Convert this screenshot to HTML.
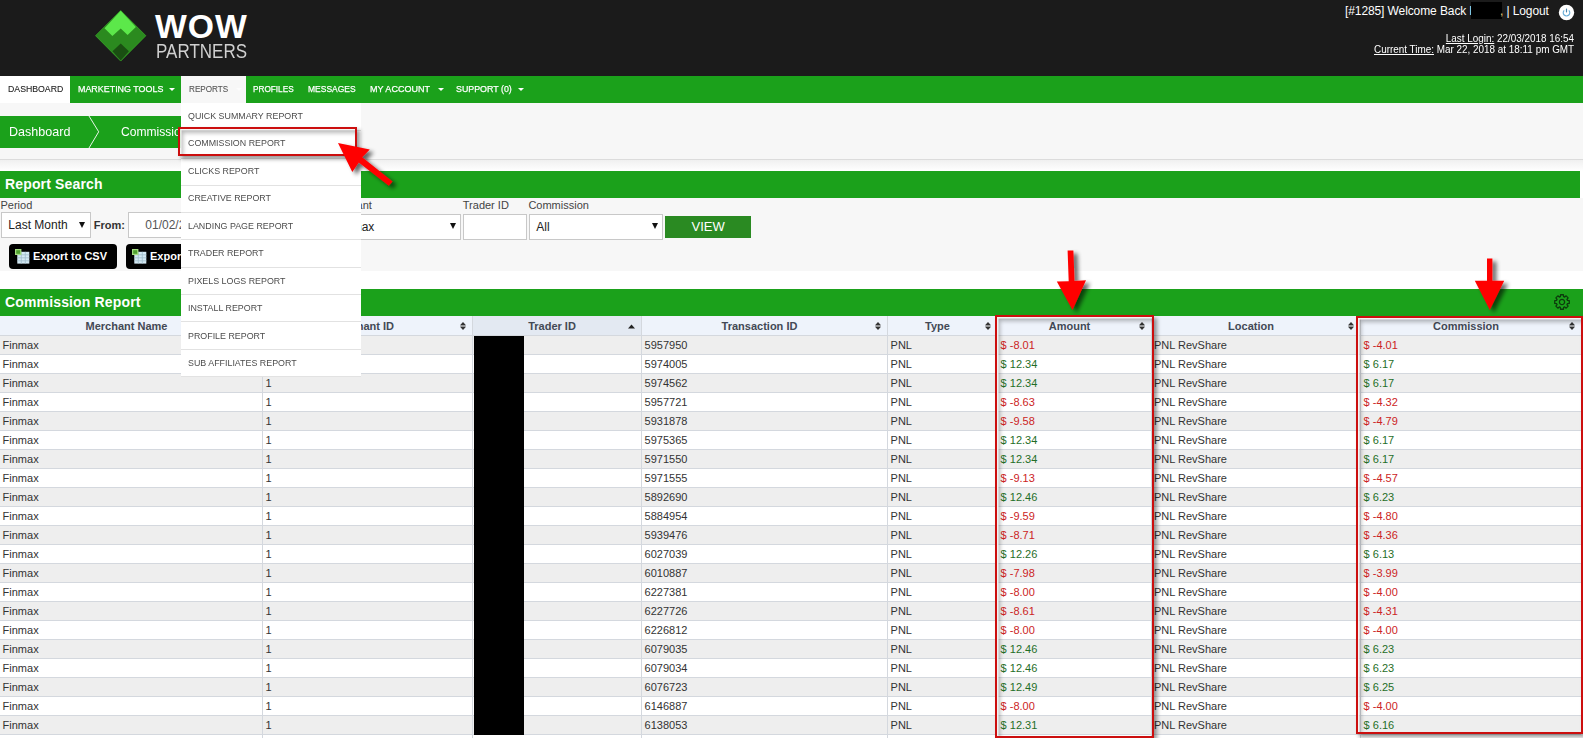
<!DOCTYPE html>
<html><head><meta charset="utf-8">
<style>
*{box-sizing:border-box}
html,body{margin:0;padding:0}
body{width:1583px;height:738px;overflow:hidden;position:relative;background:#fff;font-family:"Liberation Sans",sans-serif;color:#333}
.abs{position:absolute}
#hdr{position:absolute;left:0;top:0;width:1583px;height:76px;background:#1b1b1b}
#nav{position:absolute;left:0;top:76px;width:1583px;height:27px;background:#1ba11b}
.nt{position:absolute;top:-0.6px;height:27px;line-height:27px;font-size:9.6px;color:#fff;-webkit-text-stroke:0.25px currentColor;white-space:nowrap;transform-origin:0 50%}
.caret{position:absolute;top:11.8px;width:0;height:0;border-left:3.6px solid transparent;border-right:3.6px solid transparent;border-top:3.6px solid #fff}
#bcarea{position:absolute;left:0;top:103px;width:1583px;height:57px;background:#f7f7f7;border-bottom:1px solid #dcdcdc}
#bc{position:absolute;left:0;top:116px;width:250px;height:32px;background:#1ba11b}
.bar{position:absolute;left:0;height:27px;background:#1ba11b;color:#fff;font-weight:bold;font-size:14px;line-height:27px;padding-left:5px;letter-spacing:0.15px}
#search{position:absolute;left:0;top:198px;width:1583px;height:73px;background:#f7f7f7}
.lbl{position:absolute;margin-top:1px;font-size:11px;color:#444;white-space:nowrap}
.inp{position:absolute;background:#fff;border:1px solid #c8c8c8;font-size:12px;padding-top:1px;color:#222;white-space:nowrap}
.arr{position:absolute;width:0;height:0;border-left:3px solid transparent;border-right:3px solid transparent;border-top:6px solid #111}
.btn{position:absolute;overflow:hidden;background:#000;border-radius:4px;color:#fff;font-weight:bold;font-size:11px;white-space:nowrap}
.row{position:absolute;left:0;width:1581px;height:19px;border-bottom:1px solid #d4d8de}
.cell{position:absolute;height:19px;line-height:19px;font-size:11px;color:#333;white-space:nowrap}
.neg{color:#cc2424}
.pos{color:#1f6e28}
.vl{position:absolute;top:316px;width:1px;height:422px;background:#d4d8de}
.hc{position:absolute;top:316px;height:20px;line-height:20px;text-align:center;font-weight:bold;font-size:11px;color:#434955;border-bottom:1px solid #d4d8de;white-space:nowrap}
.si{position:absolute}
#menu{position:absolute;left:181px;top:103px;width:180px;height:273px;background:#fff}
.mi{position:absolute;left:0;width:180px;border-bottom:1px solid #e2e2e2;font-size:9.6px;color:#4c4c4c;padding-left:6.8px;line-height:24px;white-space:nowrap}
.ms{display:inline-block;position:relative;transform:scaleX(0.925);transform-origin:0 50%}
.redbox{position:absolute;border:2px solid #cc0f0f;box-shadow:3px 3px 4px rgba(0,0,0,.4), inset 1.5px 1.5px 0 rgba(255,255,255,.85), inset 3px 4px 4px rgba(0,0,0,.28)}
</style></head><body>
<div id="hdr">
  <svg class="abs" style="left:95px;top:10px" width="52" height="52" viewBox="0 0 52 52">
    <path d="M25.7 0.5 L50.9 25.7 L25.7 51.1 L0.5 25.7Z" fill="#2b8a1f" stroke="#3fbf2c" stroke-width="0.6"/>
    <path d="M25.7 0.8 L40.9 17 L32.6 25.1 L25.7 18.6 L17.4 25.9 L9.5 18.2Z" fill="#5ce84a"/>
    <path d="M25.7 33.6 L33.9 41.3 L25.7 50.6 L17.5 41.3Z" fill="#1a4f12"/>
  </svg>
  <div class="abs" style="left:155px;top:7px;font-size:33.7px;line-height:38px;font-weight:bold;color:#fff;letter-spacing:1px">WOW</div>
  <div class="abs" style="left:156px;top:39px;font-size:20px;line-height:24px;color:#d0d0d0;transform:scaleX(0.85);transform-origin:0 0">PARTNERS</div>
  <div class="abs" style="left:1345px;top:2px;font-size:12px;color:#fff;white-space:nowrap;letter-spacing:-0.1px">[#1285] Welcome Back l<span style="display:inline-block;width:31px;height:17px;background:#000;vertical-align:-4px;margin-left:-1px"></span><span style="margin-left:-2px;color:#e8d070">,</span> | Logout</div>
  <svg class="abs" style="left:1558px;top:4px" width="17" height="17" viewBox="0 0 17 17"><circle cx="8.5" cy="8.5" r="7.7" fill="#fff"/><path d="M6.2 6.3 A3.3 3.3 0 1 0 10.8 6.3" fill="none" stroke="#6aaed8" stroke-width="1.15"/><path d="M8.5 4.6 V8.4" stroke="#4a86ad" stroke-width="1.15"/></svg>
  <div class="abs" style="right:9px;top:33px;font-size:10px;color:#fff;text-align:right;line-height:11px;white-space:nowrap;transform:scaleX(0.99);transform-origin:100% 0"><u>Last Login:</u> 22/03/2018 16:54<br><u>Current Time:</u> Mar 22, 2018 at 18:11 pm GMT</div>
</div>
<div id="nav">
  <div class="abs" style="left:0;top:0;width:70px;height:27px;background:#fff"></div>
  <div class="abs" style="left:181px;top:0;width:64.6px;height:27px;background:#f7f7f7"></div>
  <div class="nt" style="left:7.7px;color:#222;-webkit-text-stroke:0.1px #222;transform:scaleX(0.910)">DASHBOARD</div>
  <div class="nt" style="left:77.6px;transform:scaleX(0.929)">MARKETING TOOLS</div><div class="caret" style="left:169px"></div>
  <div class="nt" style="left:188.5px;color:#555;-webkit-text-stroke:0.1px #555;transform:scaleX(0.848)">REPORTS</div><div class="caret" style="left:236px;border-top-color:#fcfcfc"></div>
  <div class="nt" style="left:253.3px;transform:scaleX(0.857)">PROFILES</div>
  <div class="nt" style="left:308px;transform:scaleX(0.884)">MESSAGES</div>
  <div class="nt" style="left:370.4px;transform:scaleX(0.940)">MY ACCOUNT</div><div class="caret" style="left:438px"></div>
  <div class="nt" style="left:455.6px;transform:scaleX(0.923)">SUPPORT (0)</div><div class="caret" style="left:518px"></div>
</div>
<div id="bcarea"></div>
<div class="abs" style="left:0;top:160px;width:1583px;height:11px;background:linear-gradient(#f0f0f0,#fff)"></div>
<div id="bc">
  <div class="abs" style="left:9px;top:-0.5px;line-height:32px;font-size:13px;color:#fff;transform:scaleX(0.965);transform-origin:0 0">Dashboard</div>
  <svg class="abs" style="left:86px;top:0" width="16" height="32" viewBox="0 0 16 32"><path d="M3 0 L12.7 15.8 L3 32" fill="none" stroke="#e8f5e8" stroke-width="1"/></svg>
  <div class="abs" style="left:120.5px;top:-0.5px;line-height:32px;font-size:13px;color:#fff;transform:scaleX(0.93);transform-origin:0 0">Commission Report</div>
</div>
<div class="bar" style="top:171px;width:1580px">Report Search</div>
<div id="search">
  <div class="lbl" style="left:0.5px;top:0px">Period</div>
  <div class="inp" style="left:1.3px;top:14.4px;width:89.3px;height:25.9px;padding-left:6px;line-height:23px">Last Month</div><div class="arr" style="left:79px;top:24px"></div>
  <div class="lbl" style="left:93.8px;top:20px;font-weight:bold;font-size:11px;color:#333">From:</div>
  <div class="inp" style="left:128.3px;top:14.3px;width:120px;height:25.9px;padding-left:16px;line-height:23px;color:#555">01/02/2018</div>
  <div class="lbl" style="left:326px;top:0px">Merchant</div>
  <div class="inp" style="left:326px;top:16.4px;width:135.4px;height:25.8px;padding-left:8px;line-height:23px">Finmax</div><div class="arr" style="left:449.7px;top:25px"></div>
  <div class="lbl" style="left:462.8px;top:0px">Trader ID</div>
  <div class="inp" style="left:463.4px;top:16.4px;width:64px;height:25.8px"></div>
  <div class="lbl" style="left:528.4px;top:0px">Commission</div>
  <div class="inp" style="left:529.3px;top:16.4px;width:134.1px;height:25.8px;padding-left:6px;line-height:23px">All</div><div class="arr" style="left:651.7px;top:25px"></div>
  <div class="abs" style="left:665.2px;top:18.2px;width:85.8px;height:22.3px;background:#2a8a22;color:#fff;font-size:13px;text-align:center;line-height:22px">VIEW</div>
  <div class="btn" style="left:9.1px;top:46px;width:107.8px;height:25px;padding-left:24px;line-height:25px"><svg class="abs" style="left:5.8px;top:4.6px" width="15" height="15" viewBox="0 0 15 15"><rect x="2.3" y="2.8" width="12" height="11.8" fill="#d4e9f4"/><path d="M2.3 5.8H14.3M2.3 8.8H14.3M2.3 11.8H14.3M6.3 2.8V14.6M10.3 2.8V14.6" stroke="#9fbccc" stroke-width="0.8"/><rect x="0" y="0" width="6.4" height="6" fill="#a4dc80"/><rect x="1.2" y="1.2" width="4" height="3.6" fill="#4e9e2e"/></svg>Export to CSV</div>
  <div class="btn" style="left:126px;top:46px;width:120px;height:25px;padding-left:24px;line-height:25px"><svg class="abs" style="left:5.8px;top:4.6px" width="15" height="15" viewBox="0 0 15 15"><rect x="2.3" y="2.8" width="12" height="11.8" fill="#d4e9f4"/><path d="M2.3 5.8H14.3M2.3 8.8H14.3M2.3 11.8H14.3M6.3 2.8V14.6M10.3 2.8V14.6" stroke="#9fbccc" stroke-width="0.8"/><rect x="0" y="0" width="6.4" height="6" fill="#a4dc80"/><rect x="1.2" y="1.2" width="4" height="3.6" fill="#4e9e2e"/></svg>Export to XLS</div>
</div>
<div class="bar" style="top:289px;width:1583px">Commission Report</div>
<svg class="abs" style="left:1552.7px;top:293.3px" width="18" height="18" viewBox="0 0 18 18"><g transform="translate(9,9)" fill="none" stroke="#0d3a0d" stroke-width="1.3" stroke-linejoin="round"><circle r="2.6"/><path d="M-1.64 -5.36 L-1.41 -7.26 L1.41 -7.26 L1.64 -5.36 L2.63 -4.94 L4.14 -6.13 L6.13 -4.14 L4.94 -2.63 L5.36 -1.64 L7.26 -1.41 L7.26 1.41 L5.36 1.64 L4.94 2.63 L6.13 4.14 L4.14 6.13 L2.63 4.94 L1.64 5.36 L1.41 7.26 L-1.41 7.26 L-1.64 5.36 L-2.63 4.94 L-4.14 6.13 L-6.13 4.14 L-4.94 2.63 L-5.36 1.64 L-7.26 1.41 L-7.26 -1.41 L-5.36 -1.64 L-4.94 -2.63 L-6.13 -4.14 L-4.14 -6.13 L-2.63 -4.94Z"/></g></svg>
<div class="hc" style="left:0px;width:262px;padding-right:9px;background:#eef3fb">Merchant Name</div><div class="hc" style="left:262px;width:210px;padding-right:9px;background:#eef3fb">Merchant ID</div><svg class="si" style="left:459.5px;top:322px" width="6" height="8" viewBox="0 0 6 8"><path d="M0 3.3 L3 0 L6 3.3Z M0 4.7 L3 8 L6 4.7Z" fill="#333"/><rect x="0.5" y="3.3" width="5" height="1.4" fill="#888"/></svg><div class="hc" style="left:472px;width:169px;padding-right:9px;background:#e3e9f2">Trader ID</div><svg class="si" style="left:628.0px;top:324px" width="7" height="5" viewBox="0 0 7 5"><path d="M0 4.5 L3.5 0.5 L7 4.5Z" fill="#222"/></svg><div class="hc" style="left:641px;width:246px;padding-right:9px;background:#eef3fb">Transaction ID</div><svg class="si" style="left:874.5px;top:322px" width="6" height="8" viewBox="0 0 6 8"><path d="M0 3.3 L3 0 L6 3.3Z M0 4.7 L3 8 L6 4.7Z" fill="#333"/><rect x="0.5" y="3.3" width="5" height="1.4" fill="#888"/></svg><div class="hc" style="left:887px;width:110px;padding-right:9px;background:#eef3fb">Type</div><svg class="si" style="left:984.5px;top:322px" width="6" height="8" viewBox="0 0 6 8"><path d="M0 3.3 L3 0 L6 3.3Z M0 4.7 L3 8 L6 4.7Z" fill="#333"/><rect x="0.5" y="3.3" width="5" height="1.4" fill="#888"/></svg><div class="hc" style="left:997px;width:154px;padding-right:9px;background:#eef3fb">Amount</div><svg class="si" style="left:1138.5px;top:322px" width="6" height="8" viewBox="0 0 6 8"><path d="M0 3.3 L3 0 L6 3.3Z M0 4.7 L3 8 L6 4.7Z" fill="#333"/><rect x="0.5" y="3.3" width="5" height="1.4" fill="#888"/></svg><div class="hc" style="left:1151px;width:209px;padding-right:9px;background:#eef3fb">Location</div><svg class="si" style="left:1347.5px;top:322px" width="6" height="8" viewBox="0 0 6 8"><path d="M0 3.3 L3 0 L6 3.3Z M0 4.7 L3 8 L6 4.7Z" fill="#333"/><rect x="0.5" y="3.3" width="5" height="1.4" fill="#888"/></svg><div class="hc" style="left:1360px;width:221px;padding-right:9px;background:#eef3fb">Commission</div><svg class="si" style="left:1568.5px;top:322px" width="6" height="8" viewBox="0 0 6 8"><path d="M0 3.3 L3 0 L6 3.3Z M0 4.7 L3 8 L6 4.7Z" fill="#333"/><rect x="0.5" y="3.3" width="5" height="1.4" fill="#888"/></svg>
<div class="row" style="top:336px;background:#eeeeee"></div><div class="cell" style="left:2.6px;top:336px">Finmax</div><div class="cell" style="left:265.6px;top:336px">1</div><div class="cell" style="left:644.6px;top:336px">5957950</div><div class="cell" style="left:890.6px;top:336px">PNL</div><div class="cell neg" style="left:1000.6px;top:336px">$ -8.01</div><div class="cell" style="left:1154.0px;top:336px">PNL RevShare</div><div class="cell neg" style="left:1363.6px;top:336px">$ -4.01</div><div class="row" style="top:355px;background:#ffffff"></div><div class="cell" style="left:2.6px;top:355px">Finmax</div><div class="cell" style="left:265.6px;top:355px">1</div><div class="cell" style="left:644.6px;top:355px">5974005</div><div class="cell" style="left:890.6px;top:355px">PNL</div><div class="cell pos" style="left:1000.6px;top:355px">$ 12.34</div><div class="cell" style="left:1154.0px;top:355px">PNL RevShare</div><div class="cell pos" style="left:1363.6px;top:355px">$ 6.17</div><div class="row" style="top:374px;background:#eeeeee"></div><div class="cell" style="left:2.6px;top:374px">Finmax</div><div class="cell" style="left:265.6px;top:374px">1</div><div class="cell" style="left:644.6px;top:374px">5974562</div><div class="cell" style="left:890.6px;top:374px">PNL</div><div class="cell pos" style="left:1000.6px;top:374px">$ 12.34</div><div class="cell" style="left:1154.0px;top:374px">PNL RevShare</div><div class="cell pos" style="left:1363.6px;top:374px">$ 6.17</div><div class="row" style="top:393px;background:#ffffff"></div><div class="cell" style="left:2.6px;top:393px">Finmax</div><div class="cell" style="left:265.6px;top:393px">1</div><div class="cell" style="left:644.6px;top:393px">5957721</div><div class="cell" style="left:890.6px;top:393px">PNL</div><div class="cell neg" style="left:1000.6px;top:393px">$ -8.63</div><div class="cell" style="left:1154.0px;top:393px">PNL RevShare</div><div class="cell neg" style="left:1363.6px;top:393px">$ -4.32</div><div class="row" style="top:412px;background:#eeeeee"></div><div class="cell" style="left:2.6px;top:412px">Finmax</div><div class="cell" style="left:265.6px;top:412px">1</div><div class="cell" style="left:644.6px;top:412px">5931878</div><div class="cell" style="left:890.6px;top:412px">PNL</div><div class="cell neg" style="left:1000.6px;top:412px">$ -9.58</div><div class="cell" style="left:1154.0px;top:412px">PNL RevShare</div><div class="cell neg" style="left:1363.6px;top:412px">$ -4.79</div><div class="row" style="top:431px;background:#ffffff"></div><div class="cell" style="left:2.6px;top:431px">Finmax</div><div class="cell" style="left:265.6px;top:431px">1</div><div class="cell" style="left:644.6px;top:431px">5975365</div><div class="cell" style="left:890.6px;top:431px">PNL</div><div class="cell pos" style="left:1000.6px;top:431px">$ 12.34</div><div class="cell" style="left:1154.0px;top:431px">PNL RevShare</div><div class="cell pos" style="left:1363.6px;top:431px">$ 6.17</div><div class="row" style="top:450px;background:#eeeeee"></div><div class="cell" style="left:2.6px;top:450px">Finmax</div><div class="cell" style="left:265.6px;top:450px">1</div><div class="cell" style="left:644.6px;top:450px">5971550</div><div class="cell" style="left:890.6px;top:450px">PNL</div><div class="cell pos" style="left:1000.6px;top:450px">$ 12.34</div><div class="cell" style="left:1154.0px;top:450px">PNL RevShare</div><div class="cell pos" style="left:1363.6px;top:450px">$ 6.17</div><div class="row" style="top:469px;background:#ffffff"></div><div class="cell" style="left:2.6px;top:469px">Finmax</div><div class="cell" style="left:265.6px;top:469px">1</div><div class="cell" style="left:644.6px;top:469px">5971555</div><div class="cell" style="left:890.6px;top:469px">PNL</div><div class="cell neg" style="left:1000.6px;top:469px">$ -9.13</div><div class="cell" style="left:1154.0px;top:469px">PNL RevShare</div><div class="cell neg" style="left:1363.6px;top:469px">$ -4.57</div><div class="row" style="top:488px;background:#eeeeee"></div><div class="cell" style="left:2.6px;top:488px">Finmax</div><div class="cell" style="left:265.6px;top:488px">1</div><div class="cell" style="left:644.6px;top:488px">5892690</div><div class="cell" style="left:890.6px;top:488px">PNL</div><div class="cell pos" style="left:1000.6px;top:488px">$ 12.46</div><div class="cell" style="left:1154.0px;top:488px">PNL RevShare</div><div class="cell pos" style="left:1363.6px;top:488px">$ 6.23</div><div class="row" style="top:507px;background:#ffffff"></div><div class="cell" style="left:2.6px;top:507px">Finmax</div><div class="cell" style="left:265.6px;top:507px">1</div><div class="cell" style="left:644.6px;top:507px">5884954</div><div class="cell" style="left:890.6px;top:507px">PNL</div><div class="cell neg" style="left:1000.6px;top:507px">$ -9.59</div><div class="cell" style="left:1154.0px;top:507px">PNL RevShare</div><div class="cell neg" style="left:1363.6px;top:507px">$ -4.80</div><div class="row" style="top:526px;background:#eeeeee"></div><div class="cell" style="left:2.6px;top:526px">Finmax</div><div class="cell" style="left:265.6px;top:526px">1</div><div class="cell" style="left:644.6px;top:526px">5939476</div><div class="cell" style="left:890.6px;top:526px">PNL</div><div class="cell neg" style="left:1000.6px;top:526px">$ -8.71</div><div class="cell" style="left:1154.0px;top:526px">PNL RevShare</div><div class="cell neg" style="left:1363.6px;top:526px">$ -4.36</div><div class="row" style="top:545px;background:#ffffff"></div><div class="cell" style="left:2.6px;top:545px">Finmax</div><div class="cell" style="left:265.6px;top:545px">1</div><div class="cell" style="left:644.6px;top:545px">6027039</div><div class="cell" style="left:890.6px;top:545px">PNL</div><div class="cell pos" style="left:1000.6px;top:545px">$ 12.26</div><div class="cell" style="left:1154.0px;top:545px">PNL RevShare</div><div class="cell pos" style="left:1363.6px;top:545px">$ 6.13</div><div class="row" style="top:564px;background:#eeeeee"></div><div class="cell" style="left:2.6px;top:564px">Finmax</div><div class="cell" style="left:265.6px;top:564px">1</div><div class="cell" style="left:644.6px;top:564px">6010887</div><div class="cell" style="left:890.6px;top:564px">PNL</div><div class="cell neg" style="left:1000.6px;top:564px">$ -7.98</div><div class="cell" style="left:1154.0px;top:564px">PNL RevShare</div><div class="cell neg" style="left:1363.6px;top:564px">$ -3.99</div><div class="row" style="top:583px;background:#ffffff"></div><div class="cell" style="left:2.6px;top:583px">Finmax</div><div class="cell" style="left:265.6px;top:583px">1</div><div class="cell" style="left:644.6px;top:583px">6227381</div><div class="cell" style="left:890.6px;top:583px">PNL</div><div class="cell neg" style="left:1000.6px;top:583px">$ -8.00</div><div class="cell" style="left:1154.0px;top:583px">PNL RevShare</div><div class="cell neg" style="left:1363.6px;top:583px">$ -4.00</div><div class="row" style="top:602px;background:#eeeeee"></div><div class="cell" style="left:2.6px;top:602px">Finmax</div><div class="cell" style="left:265.6px;top:602px">1</div><div class="cell" style="left:644.6px;top:602px">6227726</div><div class="cell" style="left:890.6px;top:602px">PNL</div><div class="cell neg" style="left:1000.6px;top:602px">$ -8.61</div><div class="cell" style="left:1154.0px;top:602px">PNL RevShare</div><div class="cell neg" style="left:1363.6px;top:602px">$ -4.31</div><div class="row" style="top:621px;background:#ffffff"></div><div class="cell" style="left:2.6px;top:621px">Finmax</div><div class="cell" style="left:265.6px;top:621px">1</div><div class="cell" style="left:644.6px;top:621px">6226812</div><div class="cell" style="left:890.6px;top:621px">PNL</div><div class="cell neg" style="left:1000.6px;top:621px">$ -8.00</div><div class="cell" style="left:1154.0px;top:621px">PNL RevShare</div><div class="cell neg" style="left:1363.6px;top:621px">$ -4.00</div><div class="row" style="top:640px;background:#eeeeee"></div><div class="cell" style="left:2.6px;top:640px">Finmax</div><div class="cell" style="left:265.6px;top:640px">1</div><div class="cell" style="left:644.6px;top:640px">6079035</div><div class="cell" style="left:890.6px;top:640px">PNL</div><div class="cell pos" style="left:1000.6px;top:640px">$ 12.46</div><div class="cell" style="left:1154.0px;top:640px">PNL RevShare</div><div class="cell pos" style="left:1363.6px;top:640px">$ 6.23</div><div class="row" style="top:659px;background:#ffffff"></div><div class="cell" style="left:2.6px;top:659px">Finmax</div><div class="cell" style="left:265.6px;top:659px">1</div><div class="cell" style="left:644.6px;top:659px">6079034</div><div class="cell" style="left:890.6px;top:659px">PNL</div><div class="cell pos" style="left:1000.6px;top:659px">$ 12.46</div><div class="cell" style="left:1154.0px;top:659px">PNL RevShare</div><div class="cell pos" style="left:1363.6px;top:659px">$ 6.23</div><div class="row" style="top:678px;background:#eeeeee"></div><div class="cell" style="left:2.6px;top:678px">Finmax</div><div class="cell" style="left:265.6px;top:678px">1</div><div class="cell" style="left:644.6px;top:678px">6076723</div><div class="cell" style="left:890.6px;top:678px">PNL</div><div class="cell pos" style="left:1000.6px;top:678px">$ 12.49</div><div class="cell" style="left:1154.0px;top:678px">PNL RevShare</div><div class="cell pos" style="left:1363.6px;top:678px">$ 6.25</div><div class="row" style="top:697px;background:#ffffff"></div><div class="cell" style="left:2.6px;top:697px">Finmax</div><div class="cell" style="left:265.6px;top:697px">1</div><div class="cell" style="left:644.6px;top:697px">6146887</div><div class="cell" style="left:890.6px;top:697px">PNL</div><div class="cell neg" style="left:1000.6px;top:697px">$ -8.00</div><div class="cell" style="left:1154.0px;top:697px">PNL RevShare</div><div class="cell neg" style="left:1363.6px;top:697px">$ -4.00</div><div class="row" style="top:716px;background:#eeeeee"></div><div class="cell" style="left:2.6px;top:716px">Finmax</div><div class="cell" style="left:265.6px;top:716px">1</div><div class="cell" style="left:644.6px;top:716px">6138053</div><div class="cell" style="left:890.6px;top:716px">PNL</div><div class="cell pos" style="left:1000.6px;top:716px">$ 12.31</div><div class="cell" style="left:1154.0px;top:716px">PNL RevShare</div><div class="cell pos" style="left:1363.6px;top:716px">$ 6.16</div><div class="row" style="top:735px;background:#ffffff"></div>
<div class="vl" style="left:262px"></div><div class="vl" style="left:472px"></div><div class="vl" style="left:641px"></div><div class="vl" style="left:887px"></div><div class="vl" style="left:997px"></div><div class="vl" style="left:1151px"></div><div class="vl" style="left:1360px"></div>
<div class="abs" style="left:474px;top:336px;width:50px;height:399px;background:#000"></div>
<div id="menu"><div class="mi" style="top:1.0px;height:27.28px"><span class="ms" style="top:0px">QUICK SUMMARY REPORT</span></div><div class="mi" style="top:28.28px;height:27.28px"><span class="ms" style="top:0px">COMMISSION REPORT</span></div><div class="mi" style="top:55.56px;height:27.28px"><span class="ms" style="top:0px">CLICKS REPORT</span></div><div class="mi" style="top:82.84px;height:27.28px"><span class="ms" style="top:0px">CREATIVE REPORT</span></div><div class="mi" style="top:110.12px;height:27.28px"><span class="ms" style="top:1px">LANDING PAGE REPORT</span></div><div class="mi" style="top:137.4px;height:27.28px"><span class="ms" style="top:1px">TRADER REPORT</span></div><div class="mi" style="top:164.68px;height:27.28px"><span class="ms" style="top:1px">PIXELS LOGS REPORT</span></div><div class="mi" style="top:191.96px;height:27.28px"><span class="ms" style="top:1px">INSTALL REPORT</span></div><div class="mi" style="top:219.24px;height:27.28px"><span class="ms" style="top:2px">PROFILE REPORT</span></div><div class="mi" style="top:246.52px;height:27.28px"><span class="ms" style="top:1px">SUB AFFILIATES REPORT</span></div></div>
<div class="redbox" style="left:178.2px;top:127.3px;width:179px;height:28.4px"></div>
<div class="redbox" style="left:995px;top:314.6px;width:159px;height:423px"></div>
<div class="redbox" style="left:1355.8px;top:316.4px;width:227.2px;height:418px"></div>
<svg class="abs" style="left:0;top:0;overflow:visible" width="1583" height="738">
  <defs><filter id="sh" x="-50%" y="-50%" width="200%" height="200%"><feGaussianBlur in="SourceAlpha" stdDeviation="2.2"/><feOffset dx="3.5" dy="3"/><feComponentTransfer><feFuncA type="linear" slope="0.6"/></feComponentTransfer><feMerge><feMergeNode/><feMergeNode in="SourceGraphic"/></feMerge></filter></defs>
  <g filter="url(#sh)" fill="#ff0000">
    <path d="M338 143 L369.8 149.5 L362.2 157.2 L392.6 181.5 L388.8 185.7 L358.8 162.4 L352.3 172 Z"/>
    <path d="M1067.6 250.5 L1073.4 250.5 L1074.5 281 L1086 280.3 L1072.5 309.9 L1056.8 281.5 L1068.7 281.2 Z"/>
    <path d="M1487 258.5 L1492.4 258.5 L1492.4 280.8 L1504.2 280.8 L1489.8 309.9 L1474.8 280.8 L1487 280.8 Z"/>
  </g>
</svg>
</body></html>
